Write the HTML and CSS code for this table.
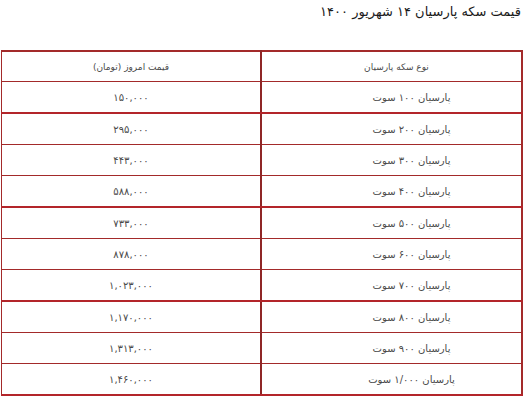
FILE: index.html
```html
<!DOCTYPE html>
<html lang="fa" dir="rtl">
<head>
<meta charset="utf-8">
<link rel="stylesheet" href="styles.css">
</head>
<body>
<h2 class="title">قیمت سکه پارسیان ۱۴ شهریور ۱۴۰۰</h2>
<table class="prices">
  <tr class="head"><td class="type">نوع سکه پارسیان</td><td class="price">قیمت امروز (تومان)</td></tr>
  <tr class="thick"><td class="type">پارسیان ۱۰۰ سوت</td><td class="price">۱۵۰,۰۰۰</td></tr>
  <tr><td class="type">پارسیان ۲۰۰ سوت</td><td class="price">۲۹۵,۰۰۰</td></tr>
  <tr><td class="type">پارسیان ۳۰۰ سوت</td><td class="price">۴۴۳,۰۰۰</td></tr>
  <tr class="thick"><td class="type">پارسیان ۴۰۰ سوت</td><td class="price">۵۸۸,۰۰۰</td></tr>
  <tr><td class="type">پارسیان ۵۰۰ سوت</td><td class="price">۷۳۳,۰۰۰</td></tr>
  <tr><td class="type">پارسیان ۶۰۰ سوت</td><td class="price">۸۷۸,۰۰۰</td></tr>
  <tr class="thick"><td class="type">پارسیان ۷۰۰ سوت</td><td class="price">۱,۰۲۳,۰۰۰</td></tr>
  <tr><td class="type">پارسیان ۸۰۰ سوت</td><td class="price">۱,۱۷۰,۰۰۰</td></tr>
  <tr><td class="type">پارسیان ۹۰۰ سوت</td><td class="price">۱,۳۱۳,۰۰۰</td></tr>
  <tr class="thick"><td class="type">پارسیان ۱/۰۰۰ سوت</td><td class="price">۱,۴۶۰,۰۰۰</td></tr>
</table>
</body>
</html>
```

FILE: styles.css
```css
html, body {
  margin: 0;
  padding: 0;
  background: #ffffff;
}
body {
  padding: 3px 5px 0 4px;
  font-family: "DejaVu Sans", Tahoma, sans-serif;
  color: #333;
}
.title {
  margin: 0;
  height: 47px;
  font-size: 13px;
  font-weight: normal;
  color: #1a1a1a;
  line-height: 18px;
  padding-right: 2px;
}
.prices {
  width: 519px;
  table-layout: fixed;
  border-collapse: collapse;
  border: 2px solid #a32a2a;
  border-left-width: 1px;
  font-size: 10px;
  color: #4a4a4a;
}
.prices td {
  height: 30px;
  padding: 0;
  text-align: center;
  border-bottom: 1px solid #a32a2a;
  vertical-align: middle;
}
.prices td.type {
  width: 261px;
  border-left: 2px solid #8f2626;
  padding-left: 40px;
  box-sizing: border-box;
}
.prices td.price {
  width: 258px;
}
.prices tr.head td.type {
  padding-left: 10px;
}
.prices tr.thick td {
  border-bottom: 2px solid #b3252a;
}
.prices tr.head td {
  height: 29px;
  font-size: 9px;
}
```
